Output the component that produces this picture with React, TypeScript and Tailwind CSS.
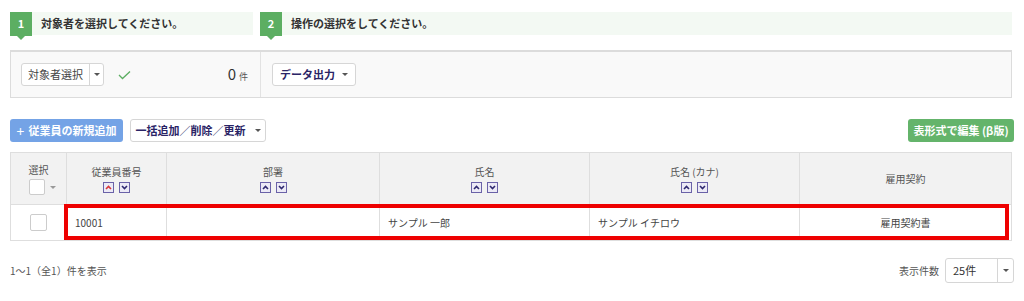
import React from "react";

const jp = { fontFamily: '"Noto Sans CJK JP", "Noto Sans", sans-serif' };

function Step({ num, label, className }: { num: string; label: string; className: string }) {
  return (
    <div className={"relative flex h-[23px] items-center bg-[#f3f9f3] " + className}>
      <div className="relative flex h-[24px] w-[22px] items-center justify-center bg-[#5cae62] text-[11px] font-bold text-white">
        {num}
        <span className="absolute -bottom-[4px] left-[7px] h-0 w-0 border-x-[4px] border-t-[4px] border-x-transparent border-t-[#5cae62]" />
      </div>
      <span className="ml-[9px] text-[11px] font-bold text-[#333]">{label}</span>
    </div>
  );
}

function Caret({ className = "" }: { className?: string }) {
  return <span className={"inline-block h-0 w-0 border-x-[3px] border-t-[3px] border-x-transparent border-t-[#555] " + className} />;
}

function SortButtons({ activeUp = false }: { activeUp?: boolean }) {
  return (
    <div className="mt-[3px] flex justify-center gap-[5px]">
      <span className="flex h-[11px] w-[11px] items-center justify-center border border-[#6a62a8] bg-[#eceaf6]">
        <svg width="7" height="5" viewBox="0 0 7 5">
          <path d="M1 4 L3.5 1.5 L6 4" fill="none" stroke={activeUp ? "#d9373a" : "#2e2870"} strokeWidth="1.6" />
        </svg>
      </span>
      <span className="flex h-[11px] w-[11px] items-center justify-center border border-[#6a62a8] bg-[#eceaf6]">
        <svg width="7" height="5" viewBox="0 0 7 5">
          <path d="M1 1 L3.5 3.5 L6 1" fill="none" stroke="#2e2870" strokeWidth="1.6" />
        </svg>
      </span>
    </div>
  );
}

const cols = [
  { label: "従業員番号", sort: true, active: true },
  { label: "部署", sort: true },
  { label: "氏名", sort: true },
  { label: "氏名 (カナ)", sort: true },
  { label: "雇用契約", sort: false },
];

export default function App() {
  return (
    <div className="h-[301px] w-[1024px] bg-white px-[10px] pt-[12px] text-[#333]" style={jp}>
      {/* steps */}
      <div className="flex gap-[7px] pr-[2px]">
        <Step num="1" label="対象者を選択してください。" className="w-[243px]" />
        <Step num="2" label="操作の選択をしてください。" className="flex-1" />
      </div>

      {/* selection panel */}
      <div className="mt-[15px] flex h-[48px] w-[1002px] border border-t-2 border-[#dcdcdc] bg-[#f9f9f9]">
        <div className="flex w-[250px] items-center border-r border-[#e2e2e2] pl-[10px] pr-[12px]">
          <div className="flex h-[23px] items-stretch rounded-[3px] border border-[#d6d6d6] bg-white">
            <span className="flex items-center px-[6px] text-[11px] text-[#444]">対象者選択</span>
            <span className="flex w-[14px] items-center justify-center border-l border-[#d6d6d6]">
              <Caret />
            </span>
          </div>
          <svg className="ml-[14px]" width="13" height="10" viewBox="0 0 13 10">
            <path d="M1 5 L4.5 8.5 L12 1.5" fill="none" stroke="#5cae62" strokeWidth="1.3" />
          </svg>
          <div className="ml-auto flex items-baseline gap-[3px]">
            <span className="text-[15px] text-[#333]">0</span>
            <span className="text-[9px] text-[#555]">件</span>
          </div>
        </div>
        <div className="flex items-center pl-[11px]">
          <button className="flex h-[23px] w-[84px] items-center justify-center gap-[7px] rounded-[3px] border border-[#d6d6d6] bg-white text-[11px] font-bold text-[#2a2466]">
            データ出力
            <Caret className="border-t-[#2a2466]" />
          </button>
        </div>
      </div>

      {/* action buttons */}
      <div className="mt-[21px] flex items-center gap-[7px]">
        <button className="flex h-[23px] w-[113px] items-center justify-center gap-[4px] rounded-[3px] bg-[#74a3e6] text-[11px] font-bold text-white">
          <span className="text-[14px] font-normal leading-none">+</span>
          従業員の新規追加
        </button>
        <button className="flex h-[23px] w-[136px] items-center justify-center gap-[9px] rounded-[3px] border border-[#d6d6d6] bg-white text-[11px] font-bold text-[#2a2466]">
          一括追加／削除／更新
          <Caret className="border-t-[#2a2466]" />
        </button>
        <button className="ml-auto flex h-[23px] w-[106px] items-center justify-center rounded-[3px] bg-[#64b46b] text-[11px] font-bold text-white">
          表形式で編集 (β版)
        </button>
      </div>

      {/* table */}
      <div className="relative mt-[10px] w-[1002px] border border-[#dedede]">
        <div className="grid grid-cols-[56px_100px_213px_210px_210px_1fr] bg-[#f2f2f2]">
          <div className="flex h-[51px] flex-col items-center justify-center border-r border-[#dedede]">
            <span className="text-[10px] text-[#555]">選択</span>
            <div className="mt-[2px] flex items-center gap-[5px] pl-[8px]">
              <span className="h-[16px] w-[16px] rounded-[2px] border border-[#ccc] bg-white" />
              <Caret className="border-t-[#999]" />
            </div>
          </div>
          {cols.map((c, i) => (
            <div
              key={c.label}
              className={"flex h-[51px] flex-col items-center justify-center " + (i < cols.length - 1 ? "border-r border-[#dedede]" : "")}
            >
              <span className="text-[10px] text-[#555]">{c.label}</span>
              {c.sort && <SortButtons activeUp={c.active} />}
            </div>
          ))}
        </div>
        <div className="grid grid-cols-[56px_100px_213px_210px_210px_1fr] border-t border-[#dedede] bg-white text-[10px] text-[#444]">
          <div className="flex h-[35px] items-center justify-center border-r border-[#dedede]">
            <span className="h-[17px] w-[17px] rounded-[2px] border border-[#ccc] bg-white" />
          </div>
          <div className="flex items-center border-r border-[#dedede] pl-[8px]">10001</div>
          <div className="border-r border-[#dedede]" />
          <div className="flex items-center border-r border-[#dedede] pl-[8px]">サンプル 一郎</div>
          <div className="flex items-center border-r border-[#dedede] pl-[8px]">サンプル イチロウ</div>
          <div className="flex items-center justify-center">雇用契約書</div>
        </div>
        {/* highlight annotation */}
        <div className="pointer-events-none absolute left-[53px] top-[51px] h-[36px] w-[945px] border-[4px] border-[#ee0000]" />
      </div>

      {/* footer */}
      <div className="mt-[17px] flex items-center">
        <span className="text-[10px] text-[#555]">1〜1（全1）件を表示</span>
        <div className="ml-auto flex items-center gap-[6px]">
          <span className="text-[10px] text-[#555]">表示件数</span>
          <div className="flex h-[25px] w-[69px] items-stretch rounded-[3px] border border-[#d6d6d6] bg-white">
            <span className="flex flex-1 items-center pl-[7px] text-[11px] text-[#333]">25件</span>
            <span className="flex w-[16px] items-center justify-center border-l border-[#d6d6d6]">
              <Caret />
            </span>
          </div>
        </div>
      </div>
    </div>
  );
}
